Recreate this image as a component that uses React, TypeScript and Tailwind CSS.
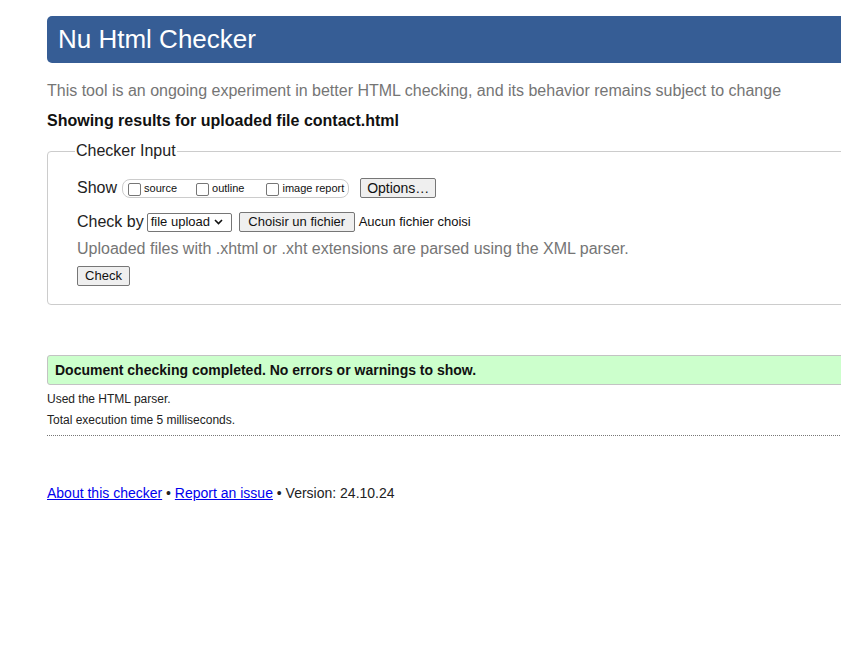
import React from "react";

const Checkbox = () => (
  <span className="inline-block w-[13px] h-[13px] border border-[#767676] rounded-[2px] bg-white mr-[3px] translate-y-[1px]" />
);

export default function App() {
  return (
    <div className="w-[841px] h-[663px] overflow-hidden bg-white text-[#1a1a1a] font-['Liberation_Sans',Arial,sans-serif]">
      <div className="pl-[47px] pt-[16px] w-[1000px]">
        <div className="h-[47px] bg-[#365d95] rounded-l-[5px] flex items-center pl-[11px]">
          <h1 className="text-white text-[26px] leading-none translate-y-[-1px]">Nu Html Checker</h1>
        </div>
        <p className="text-[#757575] text-[16px] mt-[19px] leading-[18px]">
          This tool is an ongoing experiment in better HTML checking, and its behavior remains subject to change
        </p>
        <p className="font-bold text-[16px] mt-[12px] leading-[18px] text-[#111]">Showing results for uploaded file contact.html</p>

        <div className="relative mt-[21px] border border-[#cccccc] rounded-l-[4px] h-[154px]">
          <span className="absolute left-[27px] top-[-10px] bg-white px-[1px] text-[16px] leading-[18px] text-[#222]">Checker Input</span>
          <div className="pl-[29px] pt-[26px]">
            <div className="flex items-center h-[20px]">
              <span className="text-[16px] text-[#222]">Show</span>
              <span className="ml-[5px] flex items-center h-[19px] border border-[#cccccc] rounded-[8px] pl-[5px] pr-[4px] text-[11px] text-[#111]">
                <span className="flex items-center"><Checkbox />source</span>
                <span className="flex items-center ml-[19px]"><Checkbox />outline</span>
                <span className="flex items-center ml-[22px]"><Checkbox />image report</span>
              </span>
              <span className="ml-[11px] h-[20px] w-[76px] flex items-center justify-center bg-[#efefef] border border-[#767676] rounded-[2px] text-[14px] text-[#111]">Options…</span>
            </div>
            <div className="flex items-center h-[20px] mt-[14px]">
              <span className="text-[16px] text-[#222]">Check by</span>
              <span className="ml-[3px] h-[19px] w-[85px] flex items-center border border-[#767676] rounded-[2px] pl-[3px] text-[13px] text-[#111]">
                file upload
                <svg className="ml-[4px]" width="9" height="6" viewBox="0 0 9 6"><path d="M1 1l3.5 3.5L8 1" stroke="#111" strokeWidth="1.6" fill="none" /></svg>
              </span>
              <span className="ml-[7px] h-[20px] w-[116px] flex items-center justify-center bg-[#efefef] border border-[#767676] rounded-[2px] text-[13px] text-[#111]">Choisir un fichier</span>
              <span className="ml-[4px] text-[13px] text-[#111]">Aucun fichier choisi</span>
            </div>
            <p className="text-[#757575] text-[16px] mt-[8px] leading-[18px]">
              Uploaded files with .xhtml or .xht extensions are parsed using the XML parser.
            </p>
            <span className="mt-[8px] h-[20px] w-[53px] flex items-center justify-center bg-[#efefef] border border-[#767676] rounded-[2px] text-[13px] text-[#111]">Check</span>
          </div>
        </div>

        <div className="mt-[50px] h-[30px] bg-[#ccffcc] border border-[#c3c3c3] rounded-l-[3px] flex items-center pl-[7px]">
          <span className="font-bold text-[14px] text-[#111]">Document checking completed. No errors or warnings to show.</span>
        </div>
        <p className="text-[12px] text-[#222] mt-[7px] leading-[14px]">Used the HTML parser.</p>
        <p className="text-[12px] text-[#222] mt-[7px] leading-[14px]">Total execution time 5 milliseconds.</p>
        <div className="mt-[8px] border-t border-dotted border-[#777]" />

        <p className="mt-[49px] text-[14px] text-[#222] leading-[16px]">
          <a href="#" className="text-[#0000ee] underline">About this checker</a> • <a href="#" className="text-[#0000ee] underline">Report an issue</a> • Version: 24.10.24
        </p>
      </div>
    </div>
  );
}
